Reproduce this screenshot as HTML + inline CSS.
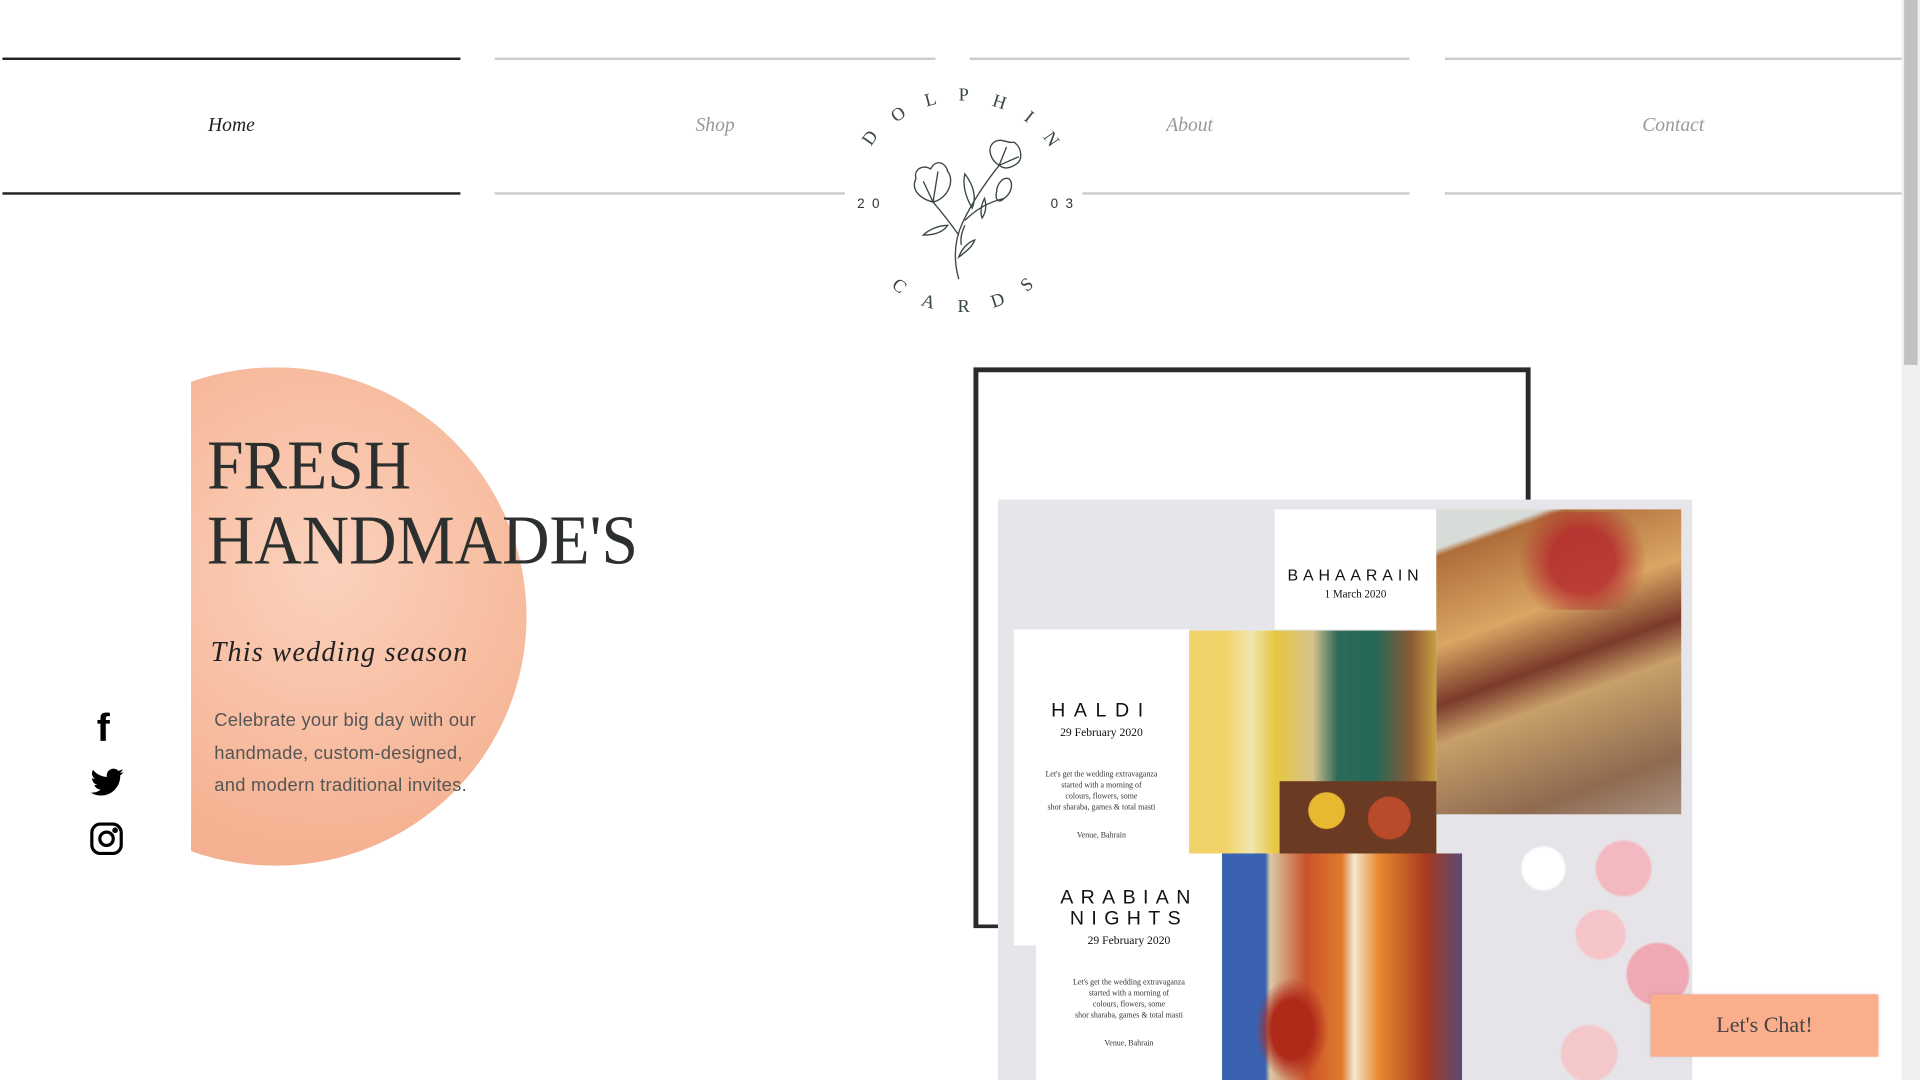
<!DOCTYPE html>
<html><head><meta charset="utf-8"><style>
html,body{margin:0;padding:0;width:1920px;height:1080px;overflow:hidden;background:#fff}
#w{position:absolute;left:0;top:0;width:1568px;height:882px;transform:scale(1.22449);transform-origin:0 0;font-family:"Liberation Serif",serif}
.a{position:absolute}
.ln{position:absolute;height:2px;background:#ccc}
.nav{position:absolute;top:94px;font-style:italic;font-size:16px;color:#999;text-align:center}
.w{background:#fff;position:absolute;text-align:center;color:#111}
.sm{font-size:6.5px;line-height:9px;color:#333}
.lg{position:absolute;font-size:15px;color:#3a4545;width:20px;margin-left:-10px;margin-top:-9px;text-align:center;line-height:18px}
</style></head><body><div id="w">
<div class="ln" style="left:2px;width:374px;top:47px;background:#222"></div>
<div class="ln" style="left:2px;width:374px;top:157px;background:#222"></div>
<div class="ln" style="left:404px;width:360px;top:47px"></div>
<div class="ln" style="left:404px;width:286px;top:157px"></div>
<div class="ln" style="left:792px;width:359px;top:47px"></div>
<div class="ln" style="left:884px;width:267px;top:157px"></div>
<div class="ln" style="left:1180px;width:373px;top:47px"></div>
<div class="ln" style="left:1180px;width:373px;top:157px"></div>
<div class="nav" style="left:2px;width:374px;color:#222">Home</div>
<div class="nav" style="left:404px;width:360px">Shop</div>
<div class="nav" style="left:792px;width:359px">About</div>
<div class="nav" style="left:1180px;width:373px">Contact</div>

<div class="lg" style="left:711px;top:113px;transform:rotate(-55deg)">D</div>
<div class="lg" style="left:734px;top:94px;transform:rotate(-35deg)">O</div>
<div class="lg" style="left:760px;top:82px;transform:rotate(-15deg)">L</div>
<div class="lg" style="left:787px;top:78px">P</div>
<div class="lg" style="left:816px;top:84px;transform:rotate(18deg)">H</div>
<div class="lg" style="left:840px;top:96px;transform:rotate(38deg)">I</div>
<div class="lg" style="left:858px;top:114px;transform:rotate(55deg)">N</div>
<div class="lg" style="left:734px;top:234px;transform:rotate(40deg)">C</div>
<div class="lg" style="left:758px;top:247px;transform:rotate(18deg)">A</div>
<div class="lg" style="left:787px;top:251px">R</div>
<div class="lg" style="left:815px;top:246px;transform:rotate(-18deg)">D</div>
<div class="lg" style="left:839px;top:233px;transform:rotate(-40deg)">S</div>
<div class="a" style="left:700px;top:161px;font:11px 'Liberation Sans',sans-serif;color:#333;letter-spacing:6px">20</div>
<div class="a" style="left:858px;top:161px;font:11px 'Liberation Sans',sans-serif;color:#333;letter-spacing:6px">03</div>
<svg class="a" style="left:740px;top:110px" width="100" height="120" viewBox="0 0 100 120">
<g fill="none" stroke="#3a4545" stroke-width="1.1">
<path d="M43,118 C38,100 40,85 46,72 C54,55 64,40 76,25"/>
<path d="M48,70 C58,60 68,55 80,52"/>
<path d="M43,82 C36,72 28,62 22,55"/>
<path d="M76,25 C68,20 66,10 72,6 C78,2 84,8 88,6 C94,10 96,20 90,24 C84,28 80,28 76,25Z"/>
<path d="M76,25 L82,10 M76,25 L92,18"/>
<path d="M22,55 C10,52 4,44 8,36 C6,28 14,24 20,28 C24,20 32,22 34,30 C40,38 34,52 22,55Z"/>
<path d="M22,55 L14,38 M22,55 L26,30"/>
<path d="M80,52 C86,48 88,40 84,36 C78,34 74,42 74,46 C72,54 76,56 80,52Z"/>
<path d="M54,60 C48,50 46,40 48,32 C54,40 58,50 54,60Z"/>
<path d="M34,74 C26,74 18,78 14,82 C22,82 30,80 34,74Z"/>
<path d="M43,100 C48,96 54,92 56,86 C50,88 45,94 43,100Z"/>
<path d="M45,90 C44,84 46,78 48,74"/>
<path d="M62,68 C60,62 62,56 64,52 C66,58 65,64 62,68Z"/>
</g></svg>

<div class="a" style="left:156px;top:300px;width:275px;height:407px;overflow:hidden">
<div style="position:absolute;left:-136px;top:0;width:410px;height:407px;border-radius:50%;background:radial-gradient(circle at 60% 40%,#fbd2bd,#f6b596 60%,#f1a585)"></div></div>
<div class="a" style="left:169px;top:350px;font-size:57px;line-height:61px;color:#2b2f2e;transform:scaleX(.94);transform-origin:0 0">FRESH<br>HANDMADE'S</div>
<div class="a" style="left:172px;top:520px;font-size:23px;font-style:italic;color:#222;letter-spacing:1px">This wedding season</div>
<div class="a" style="left:175px;top:576px;font-family:'Liberation Sans',sans-serif;font-size:15px;line-height:26.5px;color:#555;letter-spacing:.2px">Celebrate your big day with our<br>handmade, custom-designed,<br>and modern traditional invites.</div>
<div class="a" style="left:79px;top:576px;font:bold 32px 'Liberation Sans',sans-serif;color:#000">f</div>
<svg class="a" style="left:74px;top:627px" width="27" height="24" viewBox="0 0 24 20"><path d="M24 2.4a10 10 0 0 1-2.8.8A5 5 0 0 0 23.3.4a10 10 0 0 1-3.1 1.2A4.9 4.9 0 0 0 11.8 6 14 14 0 0 1 1.7.9a4.9 4.9 0 0 0 1.5 6.6A4.9 4.9 0 0 1 1 6.9a4.9 4.9 0 0 0 3.9 4.8 5 5 0 0 1-2.2.1 4.9 4.9 0 0 0 4.6 3.4A9.9 9.9 0 0 1 0 17.3 14 14 0 0 0 7.5 19.5c9 0 14-7.5 14-14v-.6A10 10 0 0 0 24 2.4z"/></svg>
<svg class="a" style="left:73px;top:671px" width="28" height="28" viewBox="0 0 28 28" fill="none" stroke="#000" stroke-width="2.6"><rect x="2" y="2" width="24" height="24" rx="7"/><circle cx="14" cy="14" r="5.5"/><circle cx="21" cy="7" r="1" fill="#000"/></svg>

<div class="a" style="left:795px;top:300px;width:447px;height:451px;border:4px solid #2a2a2a;border-bottom-width:3px"></div>
<div class="a" style="left:815px;top:408px;width:567px;height:474px;background:#e6e5ea;overflow:hidden">
<div class="a" style="left:380px;top:258px;width:187px;height:216px;background:radial-gradient(circle at 70% 20%,#f3b9c0 0 10%,transparent 11%),radial-gradient(circle at 35% 20%,#fff 0 8%,transparent 9%),radial-gradient(circle at 60% 45%,#f6c5c9 0 12%,transparent 13%),radial-gradient(circle at 85% 60%,#f0a8b4 0 12%,transparent 13%),radial-gradient(circle at 55% 90%,#f4c7cb 0 10%,transparent 11%),#e6e4e8"></div>
<div class="w" style="left:226px;top:8px;width:132px;height:98px"><div style="font:13px 'Liberation Sans',sans-serif;letter-spacing:4px;margin-top:46px">BAHAARAIN</div><div style="font-size:9px;margin-top:3px">1 March 2020</div></div>
<div class="a" style="left:358px;top:8px;width:200px;height:249px;background:linear-gradient(160deg,#d8dcd8 0 10%,#b06d3a 12%,#d9a663 35%,#7a3a2a 50%,#c8a06a 60%,#8f6a50 85%,#a89080)"></div>
<div class="a" style="left:400px;top:10px;width:155px;height:80px;background:radial-gradient(circle,#b3242a 0 30%,transparent 60%);opacity:.8"></div>
<div class="w" style="left:13px;top:106px;width:143px;height:258px"><div style="font:16px 'Liberation Sans',sans-serif;letter-spacing:7px;margin-top:58px">HALDI</div><div style="font-size:9.5px;margin-top:4px">29 February 2020</div><div class="sm" style="margin-top:24px">Let's get the wedding extravaganza<br>started with a morning of<br>colours, flowers, some<br>shor sharaba, games &amp; total masti</div><div class="sm" style="margin-top:14px">Venue, Bahrain</div></div>
<div class="a" style="left:156px;top:107px;width:202px;height:182px;background:linear-gradient(90deg,#f2d36a 0 15%,#f1e6b0 25%,#e7c640 35%,#d6c28a 50%,#2e6a5a 60%,#236857 75%,#8b5a36 90%,#c8a040)"></div>
<div class="a" style="left:230px;top:230px;width:128px;height:60px;background:radial-gradient(circle at 30% 40%,#e8b830 0 15%,transparent 16%),radial-gradient(circle at 70% 50%,#b94a2a 0 18%,transparent 19%),#6b3a22"></div>
<div class="w" style="left:31px;top:289px;width:152px;height:185px"><div style="font:16px 'Liberation Sans',sans-serif;letter-spacing:6px;line-height:17px;margin-top:28px">ARABIAN<br>NIGHTS</div><div style="font-size:9.5px;margin-top:5px">29 February 2020</div><div class="sm" style="margin-top:24px">Let's get the wedding extravaganza<br>started with a morning of<br>colours, flowers, some<br>shor sharaba, games &amp; total masti</div><div class="sm" style="margin-top:14px">Venue, Bahrain</div></div>
<div class="a" style="left:183px;top:289px;width:196px;height:185px;background:linear-gradient(90deg,#3a62b0 0 18%,#d9c9a8 20%,#c9532a 35%,#e07a2a 50%,#f3e8d0 55%,#e88a30 65%,#a83a20 85%,#5a4a70)"></div>
<div class="a" style="left:210px;top:390px;width:60px;height:85px;background:radial-gradient(ellipse,#b02a1a 0 40%,transparent 70%)"></div>
</div>
<div class="a" style="left:1348px;top:812px;width:186px;height:51px;background:#fbae8c;box-shadow:0 0 3px rgba(0,0,0,.15);color:#444;font-size:18px;line-height:51px;text-align:center">Let's Chat!</div>
<div class="a" style="left:1553px;top:0;width:15px;height:882px;background:#f0f0f0"></div>
<div class="a" style="left:1555px;top:0;width:11px;height:298px;background:#c1c1c1"></div>
</div></body></html>
